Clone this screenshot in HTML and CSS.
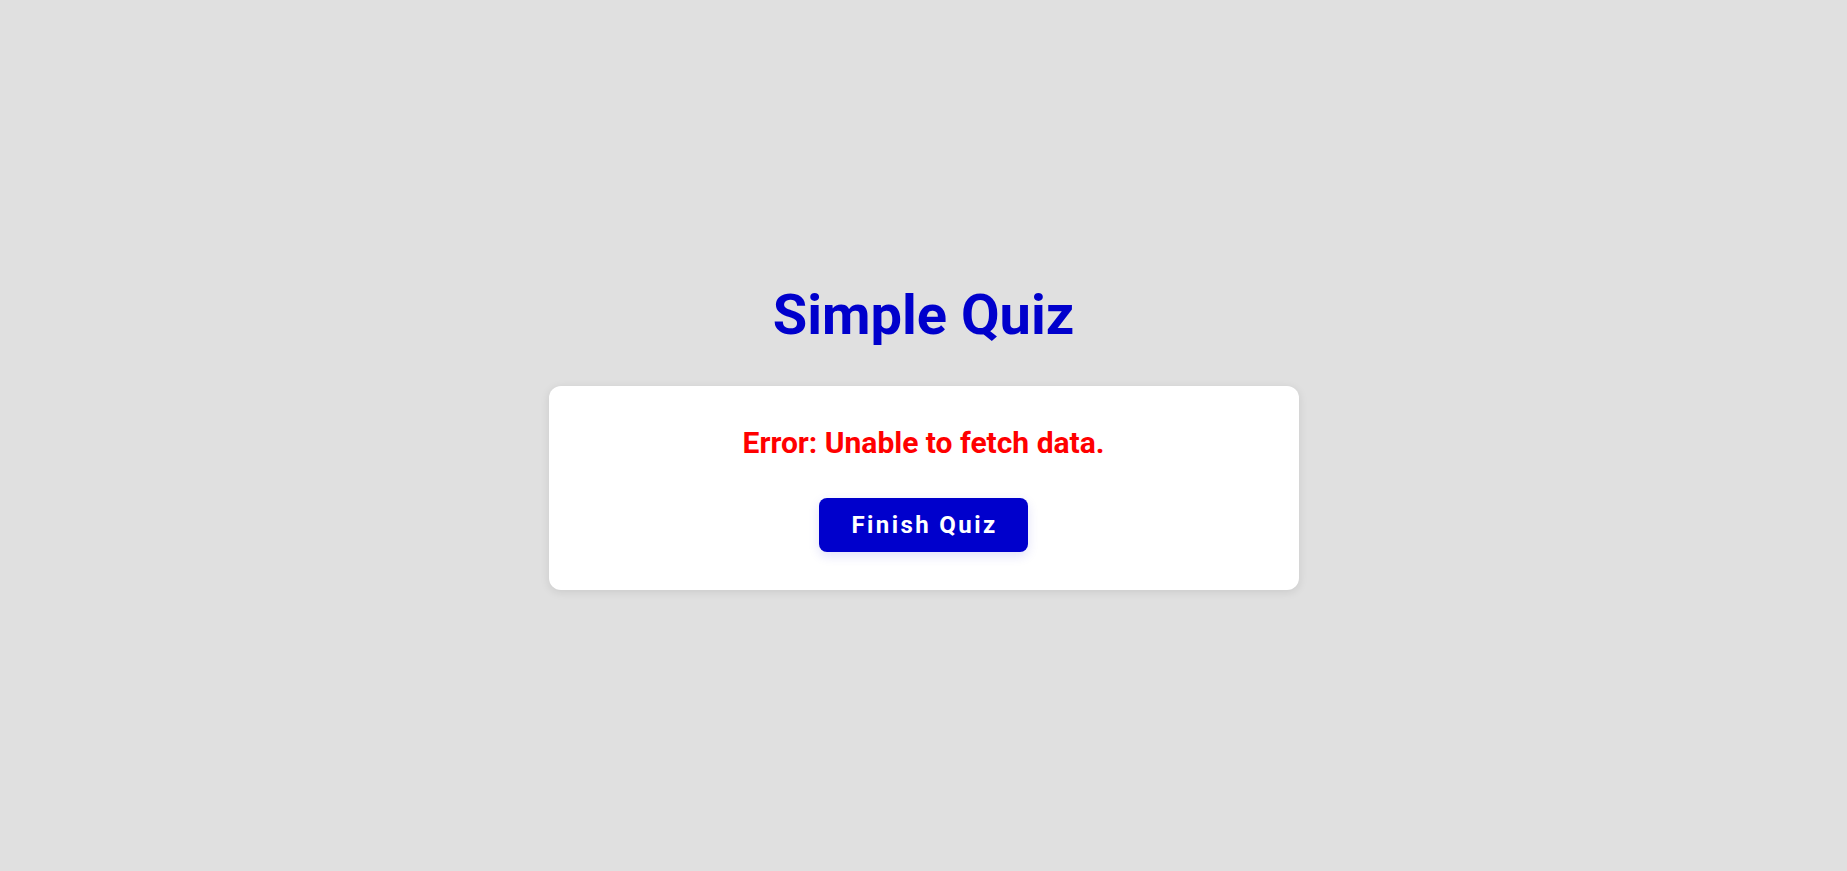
FILE: index.html
```html
<!DOCTYPE html>
<html lang="en">
<head>
<meta charset="utf-8">
<title>Simple Quiz</title>
<link rel="stylesheet" href="styles.css">
</head>
<body>
<main class="app">
  <h1 class="title">Simple Quiz</h1>
  <section class="card">
    <p class="error">Error: Unable to fetch data.</p>
    <button class="finish-btn" type="button">Finish Quiz</button>
  </section>
</main>
</body>
</html>
```

FILE: styles.css
```css
html, body {
  margin: 0;
  padding: 0;
}
body {
  background: #e0e0e0;
  font-family: Roboto, "Liberation Sans", Arial, sans-serif;
  min-height: 100vh;
  display: flex;
  align-items: center;
  justify-content: center;
}
.app {
  display: flex;
  flex-direction: column;
  align-items: center;
}
.title {
  margin: 0 0 38px;
  font-size: 56px;
  font-weight: 700;
  color: #0000cc;
  line-height: normal;
}
.card {
  box-sizing: border-box;
  width: 750px;
  background: #ffffff;
  border-radius: 12px;
  box-shadow: 0 2px 10px rgba(0, 0, 0, 0.1);
  padding: 39px 40px 38px;
  display: flex;
  flex-direction: column;
  align-items: center;
  gap: 38px;
}
.error {
  margin: 0;
  color: #ff0000;
  font-size: 30px;
  font-weight: 700;
  line-height: normal;
}
.finish-btn {
  font-family: inherit;
  font-size: 24px;
  font-weight: 700;
  letter-spacing: 2.4px;
  color: #ffffff;
  background: #0000cc;
  border: none;
  border-radius: 8px;
  padding: 13px 30px 13px 32px;
  line-height: normal;
  box-shadow: 0 4px 12px rgba(0, 0, 204, 0.12);
  cursor: pointer;
}
```
